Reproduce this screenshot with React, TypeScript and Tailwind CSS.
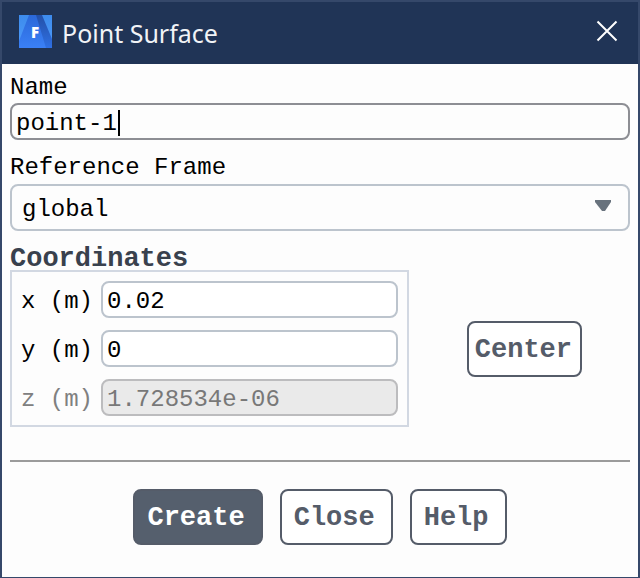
import type { ReactNode } from 'react';

const mono = "font-['Liberation_Mono','Noto_Sans_CJK_SC',monospace]";
const field = 'h-[37px] w-full min-w-0 rounded-lg border-2 px-1 pt-1 text-2xl leading-7 outline-none';

function Logo() {
  return (
    <svg viewBox="0 0 33 33" className="size-[33px]" aria-hidden="true">
      <defs>
        <linearGradient id="base" x1="0" y1="0" x2="0" y2="1">
          <stop offset="0" stopColor="#3d8bec" />
          <stop offset="1" stopColor="#4e9cfc" />
        </linearGradient>
        <linearGradient id="peak" x1="0" y1="0" x2="0" y2="1">
          <stop offset="0" stopColor="#2b68d8" />
          <stop offset="1" stopColor="#3a80f6" />
        </linearGradient>
        <linearGradient id="shade" x1="0" y1="0" x2="0" y2="1">
          <stop offset="0" stopColor="#2350a8" />
          <stop offset="1" stopColor="#2f70e4" />
        </linearGradient>
      </defs>
      <rect width="33" height="33" fill="url(#base)" />
      <path d="M10 0h9l9 33H0v-7z" fill="url(#peak)" />
      <path d="M17 0h6l10 24v9h-6z" fill="url(#shade)" />
      <text x="16" y="23" textAnchor="middle" fontSize="15" fontWeight="800" fill="#fff" fontFamily="Open Sans, sans-serif">F</text>
    </svg>
  );
}

function OutlineButton({ children, className }: { children: ReactNode; className: string }) {
  return (
    <button type="button" className={`h-14 rounded-lg border-2 border-[#555c69] pt-[2px] text-[27px] leading-8 font-bold ${className}`}>
      {children}
    </button>
  );
}

function Coordinate({ id, axis, value, disabled = false }: { id: string; axis: string; value: string; disabled?: boolean }) {
  return (
    <div className="flex items-center gap-2">
      <label htmlFor={id} className={`shrink-0 pt-1 text-2xl leading-7 whitespace-pre ${disabled ? 'text-[#808080]' : 'text-black'}`}>
        {axis} (m)
      </label>
      <input
        id={id}
        defaultValue={value}
        disabled={disabled}
        className={`${field} ${disabled ? 'border-[#bcbcbe] bg-[#eaeaea] text-[#787878]' : 'border-[#bcc4cd] bg-white text-black'}`}
      />
    </div>
  );
}

export default function App() {
  return (
    <main className={`flex min-h-screen flex-col border-2 border-[#35486a] bg-[#fdfdfd] text-black ${mono}`}>
      <header className="flex h-[62px] items-center bg-[#203456] pr-4 pb-1 pl-[17px]">
        <Logo />
        <h1 className="ml-[10px] flex-1 pt-1 font-['Noto_Sans',sans-serif] text-[25px] leading-8 text-[#f1f3f6]">Point Surface</h1>
        <button type="button" aria-label="Close dialog" className="p-1">
          <svg viewBox="0 0 22 22" className="size-[22px]" fill="none" stroke="#fff" strokeWidth="2">
            <path d="M1.500 1.500l19 19M20.500 1.500l-19 19" />
          </svg>
        </button>
      </header>

      <form className="px-2 pt-3 pb-8">
        <label htmlFor="name" className="mb-[3px] block text-2xl leading-6">Name</label>
        <div className="relative flex">
          <input id="name" defaultValue="point-1" className={`${field} border-[#8d8e94] bg-[#fdfdfd]`} />
          <span className="absolute top-[7px] left-[108px] h-[26px] w-[2px] bg-black" />
        </div>

        <label htmlFor="frame" className="mt-4 mb-1 block text-2xl leading-6">Reference Frame</label>
        <div className="relative flex">
          <select id="frame" className="h-[47px] w-full appearance-none rounded-lg border-2 border-[#bcc4cd] bg-[#fdfdfd] px-[10px] pt-1 text-2xl leading-7">
            <option>global</option>
          </select>
          <svg viewBox="0 0 16 11" className="pointer-events-none absolute top-4 right-[19px] h-[11px] w-4" aria-hidden="true">
            <path d="M0 0h16v2l-6 9H7L0 2z" fill="#68727d" />
          </svg>
        </div>

        <h2 id="coordinates" className="mt-4 text-[27px] leading-6 font-bold text-[#39414d]">Coordinates</h2>
        <div className="-mt-px flex items-center">
          <div role="group" aria-labelledby="coordinates" className="flex min-w-0 flex-1 flex-col gap-3 border-2 border-[#d2d8e2] p-[9px]">
            <Coordinate id="x" axis="x" value="0.02" />
            <Coordinate id="y" axis="y" value="0" />
            <Coordinate id="z" axis="z" value="1.728534e-06" disabled />
          </div>
          <OutlineButton className="mr-12 ml-[58px] bg-white pr-2 pl-[6px] text-[#555c69]">Center</OutlineButton>
        </div>

        <hr className="mt-[33px] border-t-2 border-[#9b9b9b]" />

        <div className="mt-[27px] flex justify-center gap-[17px]">
          <OutlineButton className="bg-[#555f6d] pr-4 pl-3 text-white">Create</OutlineButton>
          <OutlineButton className="bg-white pr-4 pl-3 text-[#555c69]">Close</OutlineButton>
          <OutlineButton className="bg-white pr-4 pl-3 text-[#555c69]">Help</OutlineButton>
        </div>
      </form>
    </main>
  );
}
